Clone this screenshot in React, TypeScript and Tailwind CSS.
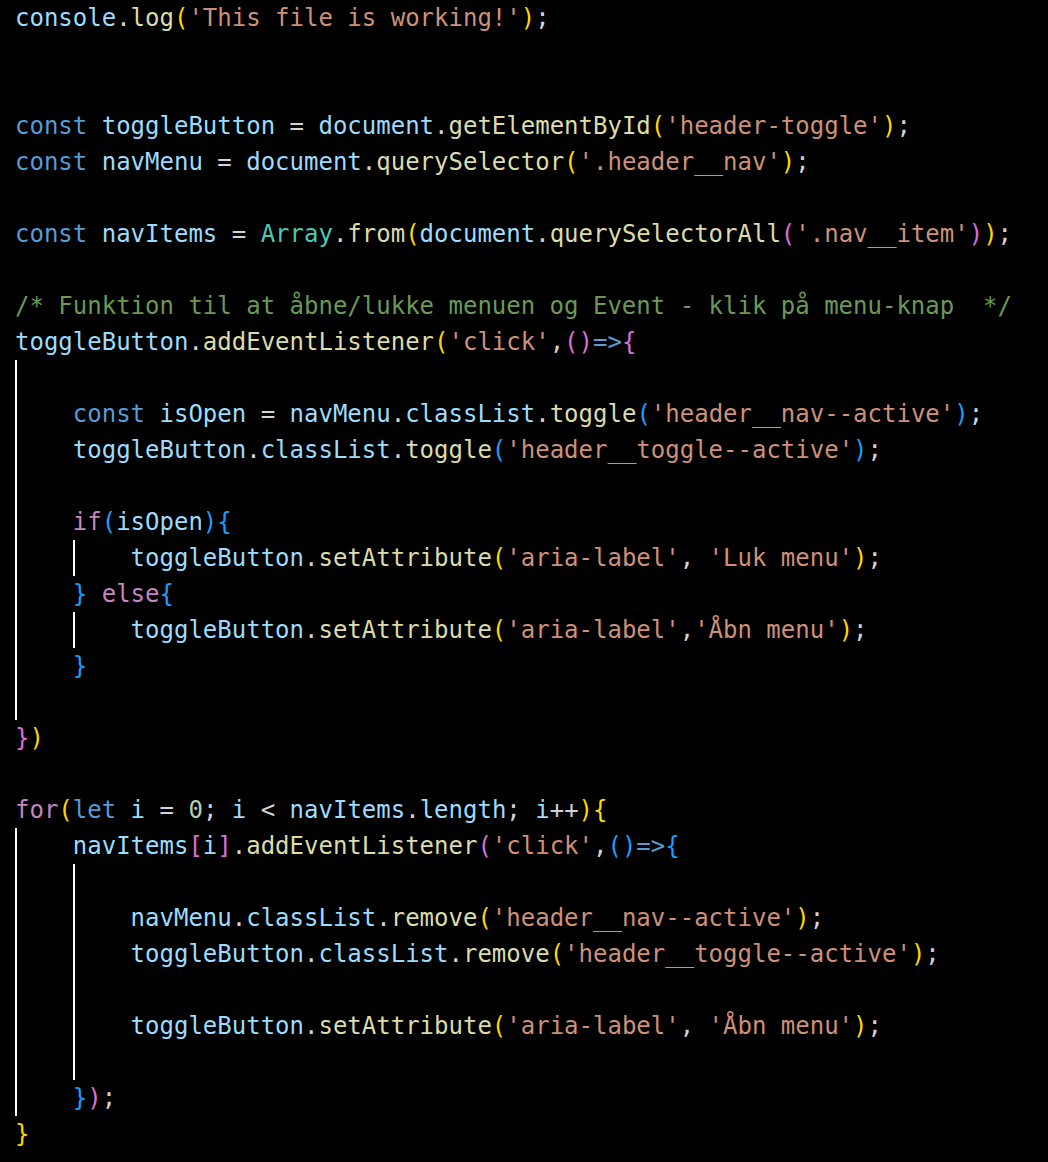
type Tok = [string, string];
type Line = { ind?: number; g?: number; t?: Tok[] };

const v = "text-[#9CDCFE]";
const f = "text-[#DCDCAA]";
const s = "text-[#CE9178]";
const k = "text-[#569CD6]";
const c = "text-[#C586C0]";
const ty = "text-[#4EC9B0]";
const cm = "text-[#6A9955]";
const n = "text-[#B5CEA8]";
const p = "text-[#D4D4D4]";
const gold = "text-[#FFD700]";
const orc = "text-[#DA70D6]";
const blu = "text-[#179FFF]";

const lines: Line[] = [
  { t: [["console", v], [".", p], ["log", f], ["(", gold], ["'This file is working!'", s], [")", gold], [";", p]] },
  {},
  {},
  {
    t: [
      ["const ", k], ["toggleButton", v], [" = ", p], ["document", v], [".", p], ["getElementById", f],
      ["(", gold], ["'header-toggle'", s], [")", gold], [";", p],
    ],
  },
  {
    t: [
      ["const ", k], ["navMenu", v], [" = ", p], ["document", v], [".", p], ["querySelector", f],
      ["(", gold], ["'.header__nav'", s], [")", gold], [";", p],
    ],
  },
  {},
  {
    t: [
      ["const ", k], ["navItems", v], [" = ", p], ["Array", ty], [".", p], ["from", f], ["(", gold],
      ["document", v], [".", p], ["querySelectorAll", f], ["(", orc], ["'.nav__item'", s], [")", orc],
      [")", gold], [";", p],
    ],
  },
  {},
  { t: [["/* Funktion til at åbne/lukke menuen og Event - klik på menu-knap  */", cm]] },
  {
    t: [
      ["toggleButton", v], [".", p], ["addEventListener", f], ["(", gold], ["'click'", s], [",", p],
      ["()", orc], ["=>", k], ["{", orc],
    ],
  },
  { ind: 1, g: 1 },
  {
    ind: 1, g: 1,
    t: [
      ["const ", k], ["isOpen", v], [" = ", p], ["navMenu", v], [".", p], ["classList", v], [".", p],
      ["toggle", f], ["(", blu], ["'header__nav--active'", s], [")", blu], [";", p],
    ],
  },
  {
    ind: 1, g: 1,
    t: [
      ["toggleButton", v], [".", p], ["classList", v], [".", p], ["toggle", f], ["(", blu],
      ["'header__toggle--active'", s], [")", blu], [";", p],
    ],
  },
  { ind: 1, g: 1 },
  { ind: 1, g: 1, t: [["if", c], ["(", blu], ["isOpen", v], [")", blu], ["{", blu]] },
  {
    ind: 2, g: 2,
    t: [
      ["toggleButton", v], [".", p], ["setAttribute", f], ["(", gold], ["'aria-label'", s], [", ", p],
      ["'Luk menu'", s], [")", gold], [";", p],
    ],
  },
  { ind: 1, g: 1, t: [["}", blu], [" ", p], ["else", c], ["{", blu]] },
  {
    ind: 2, g: 2,
    t: [
      ["toggleButton", v], [".", p], ["setAttribute", f], ["(", gold], ["'aria-label'", s], [",", p],
      ["'Åbn menu'", s], [")", gold], [";", p],
    ],
  },
  { ind: 1, g: 1, t: [["}", blu]] },
  { ind: 1, g: 1 },
  { t: [["}", orc], [")", gold]] },
  {},
  {
    t: [
      ["for", c], ["(", gold], ["let ", k], ["i", v], [" = ", p], ["0", n], ["; ", p], ["i", v], [" < ", p],
      ["navItems", v], [".", p], ["length", v], ["; ", p], ["i", v], ["++", p], [")", gold], ["{", gold],
    ],
  },
  {
    ind: 1, g: 1,
    t: [
      ["navItems", v], ["[", orc], ["i", v], ["]", orc], [".", p], ["addEventListener", f], ["(", orc],
      ["'click'", s], [",", p], ["()", blu], ["=>", k], ["{", blu],
    ],
  },
  { ind: 2, g: 2 },
  {
    ind: 2, g: 2,
    t: [
      ["navMenu", v], [".", p], ["classList", v], [".", p], ["remove", f], ["(", gold],
      ["'header__nav--active'", s], [")", gold], [";", p],
    ],
  },
  {
    ind: 2, g: 2,
    t: [
      ["toggleButton", v], [".", p], ["classList", v], [".", p], ["remove", f], ["(", gold],
      ["'header__toggle--active'", s], [")", gold], [";", p],
    ],
  },
  { ind: 2, g: 2 },
  {
    ind: 2, g: 2,
    t: [
      ["toggleButton", v], [".", p], ["setAttribute", f], ["(", gold], ["'aria-label'", s], [", ", p],
      ["'Åbn menu'", s], [")", gold], [";", p],
    ],
  },
  { ind: 2, g: 2 },
  { ind: 1, g: 1, t: [["}", blu], [")", orc], [";", p]] },
  { t: [["}", gold]] },
];

function CodeLine({ line }: { line: Line }) {
  const ind = line.ind ?? 0;
  const g = line.g ?? 0;
  return (
    <div className="flex h-[36px] items-stretch leading-[36px]">
      {Array.from({ length: ind }).map((_, i) => (
        <span
          key={i}
          className={i < g ? "block w-[4ch] shrink-0 border-l-2 border-white" : "block w-[4ch] shrink-0"}
        />
      ))}
      <span className="whitespace-pre">
        {(line.t ?? []).map(([text, cls], i) => (
          <span key={i} className={cls}>
            {text}
          </span>
        ))}
      </span>
    </div>
  );
}

export default function App() {
  return (
    <div className="min-h-[1162px] w-[1048px] bg-black pl-[15px] font-['DejaVu_Sans_Mono','Liberation_Mono',monospace] text-[24px] text-[#D4D4D4]">
      {lines.map((line, i) => (
        <CodeLine key={i} line={line} />
      ))}
    </div>
  );
}
